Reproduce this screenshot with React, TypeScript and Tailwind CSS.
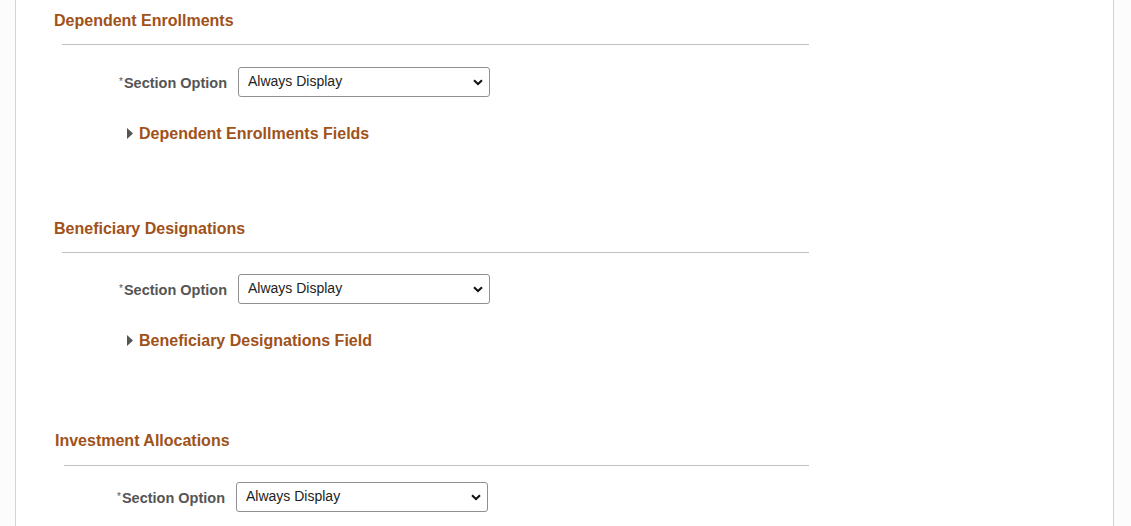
import React from "react";

type Section = {
  title: string;
  link?: string;
  pad: string; // left shift for the section
  ruleGap: string;
  selectGap: string;
  topGap: string;
};

const sections: Section[] = [
  { title: "Dependent Enrollments", link: "Dependent Enrollments Fields", pad: "pl-0", topGap: "pt-[11px]", ruleGap: "mt-[13px]", selectGap: "mt-[22px]" },
  { title: "Beneficiary Designations", link: "Beneficiary Designations Field", pad: "pl-0", topGap: "pt-[76px]", ruleGap: "mt-[13px]", selectGap: "mt-[21px]" },
  { title: "Investment Allocations", pad: "pl-[1px]", topGap: "pt-[81px]", ruleGap: "mt-[14px]", selectGap: "mt-[16px]" },
];

function Chevron() {
  return (
    <svg width="10" height="7" viewBox="0 0 10 7" className="pointer-events-none absolute right-[7px] top-[12px]">
      <path d="M1 1.2 L5 5 L9 1.2" fill="none" stroke="#111" strokeWidth="2" />
    </svg>
  );
}

function SectionBlock({ s, last }: { s: Section; last: boolean }) {
  return (
    <div className={`${s.topGap} ${s.pad}`}>
      <h2 className="ml-[38px] h-5 text-[16px] font-bold leading-5 text-[#9f5219]">{s.title}</h2>
      <div className={`${s.ruleGap} ${last ? "ml-[47px] w-[745px]" : "ml-[46px] w-[747px]"} h-px bg-[#c0c0c0]`} />
      <div className={`${s.selectGap} flex h-[30px] items-center`}>
        <div className={`${last ? "w-[208px]" : "w-[211px]"} pt-[4px] text-right text-[14.5px] font-bold leading-[26px] text-[#555555]`}>
          <span className="relative -top-[3px] mr-px text-[10px] font-normal">*</span>Section Option
        </div>
        <div className="relative ml-[11px] h-[30px]">
          <select
            defaultValue="Always Display"
            className="block h-[30px] w-[252px] appearance-none rounded-[3px] border border-[#8f8f8f] bg-white pb-[2px] pl-[9px] text-[14px] leading-[20px] text-[#222] outline-none"
          >
            <option>Always Display</option>
            <option>Never Display</option>
          </select>
          <Chevron />
        </div>
      </div>
      {s.link && (
        <div className="mt-[26px] flex h-5 items-center pt-px">
          <svg width="6" height="11" viewBox="0 0 6 11" className="ml-[111px]">
            <path d="M0 0 L6 5.5 L0 11 Z" fill="#555555" />
          </svg>
          <span className="ml-[6px] text-[16px] font-bold leading-5 text-[#9f5219]">{s.link}</span>
        </div>
      )}
    </div>
  );
}

export default function App() {
  return (
    <div className="h-[526px] w-[1131px] overflow-hidden bg-[#fcfcfc] font-['Liberation_Sans',Arial,sans-serif]">
      <div className="ml-[15px] flow-root h-full w-[1099px] border-x border-[#d4d4d4] bg-white">
        {sections.map((s, i) => (
          <SectionBlock key={s.title} s={s} last={i === sections.length - 1} />
        ))}
      </div>
    </div>
  );
}
